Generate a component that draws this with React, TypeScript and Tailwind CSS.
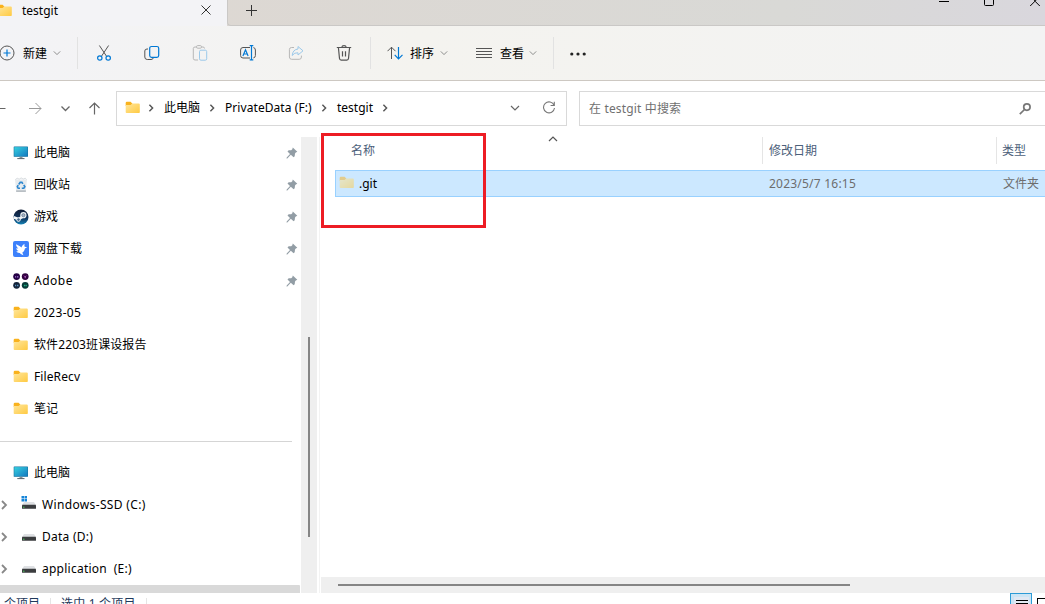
import type { ReactNode } from 'react';

type IconName = 'pc' | 'recycle' | 'steam' | 'bird' | 'adobe' | 'folder' | 'ssd' | 'drive';

interface NavItem {
  name: string;
  icon: IconName;
  pinned?: boolean;
  tracking?: string;
}

const QUICK_ACCESS: NavItem[] = [
  { name: '此电脑', icon: 'pc', pinned: true },
  { name: '回收站', icon: 'recycle', pinned: true },
  { name: '游戏', icon: 'steam', pinned: true },
  { name: '网盘下载', icon: 'bird', pinned: true },
  { name: 'Adobe', icon: 'adobe', pinned: true, tracking: 'tracking-[0.5px]' },
  { name: '2023-05', icon: 'folder', tracking: 'tracking-[0.3px]' },
  { name: '软件2203班课设报告', icon: 'folder', tracking: 'tracking-[0.1px]' },
  { name: 'FileRecv', icon: 'folder', tracking: 'tracking-[0.1px]' },
  { name: '笔记', icon: 'folder' },
];

const DRIVES: NavItem[] = [
  { name: 'Windows-SSD (C:)', icon: 'ssd', tracking: 'tracking-[0.35px]' },
  { name: 'Data (D:)', icon: 'drive', tracking: 'tracking-[0.25px]' },
  { name: 'application  (E:)', icon: 'drive', tracking: 'tracking-[0.25px]' },
];

function Chevron({ dir = 'down', className = '' }: { dir?: 'down' | 'up' | 'right'; className?: string }) {
  const paths = {
    down: 'M1 3 L5 7 L9 3',
    up: 'M1 7 L5 3 L9 7',
    right: 'M3 1 L7 5 L3 9',
  };
  return (
    <svg viewBox="0 0 10 10" fill="none" stroke="currentColor" className={`shrink-0 ${className}`}>
      <path d={paths[dir]} strokeWidth={dir === 'right' ? 1.8 : 1.2} />
    </svg>
  );
}

function Folder({ className = '' }: { className?: string }) {
  return (
    <svg viewBox="0 0 16 16" className={`w-4 h-4 shrink-0 ${className}`}>
      <defs>
        <linearGradient id="folder" x1="0" y1="0" x2="1" y2="1">
          <stop offset="0" stopColor="#ffe69c" />
          <stop offset="1" stopColor="#ffca42" />
        </linearGradient>
      </defs>
      <path d="M.7 3Q.7 1.800 1.800 1.800H5.600L7.200 3.400V6H.7z" fill="#f9b21d" />
      <path d="M.7 5H5.600L7.200 3.400H13.800Q14.800 3.400 14.800 4.400V12.200Q14.800 13 14 13H1.600Q.7 13 .7 12.200z" fill="url(#folder)" />
    </svg>
  );
}

function ItemIcon({ icon }: { icon: IconName }) {
  if (icon === 'folder') return <Folder />;
  return (
    <svg viewBox="0 0 16 16" className="w-4 h-4 shrink-0">
      {icon === 'pc' && (
        <>
          <defs>
            <linearGradient id="screen" x1="0" y1="0" x2="1" y2="1">
              <stop offset="0" stopColor="#36d1e0" />
              <stop offset="1" stopColor="#1479c0" />
            </linearGradient>
          </defs>
          <rect x="0.7" y="1.5" width="14.3" height="10.3" rx="0.6" fill="#17739f" />
          <rect x="1.3" y="2.1" width="13.1" height="9.1" fill="url(#screen)" />
          <path d="M6.5 11.800h3v1.600h-3z" fill="#8b9298" />
          <path d="M4.300 13.100h7.200v1H4.300z" fill="#596168" />
        </>
      )}
      {icon === 'recycle' && (
        <>
          <path d="M2 2.200h12L12.800 14.500H3.200z" fill="#e7ebee" />
          <path d="M2.400 2.500l1.800-1.300 2 .9 2-1.200 2 1.100 2-.8 1.300 1.200" fill="#f5f6f7" stroke="#c5cbd0" strokeWidth="0.6" />
          <path d="M3.100 13.200h9.800l-.1 1.800H3.200z" fill="#b9bfc4" />
          <path d="M5.700 7.500L7.200 5.400h1.700l1 1.500M10.800 7.900l1.100 1.900-1.100 1.500H8.800M7 11.300H5.200L4.300 9.800l.9-1.700" fill="none" stroke="#2d87cf" strokeWidth="1.600" />
        </>
      )}
      {icon === 'steam' && (
        <>
          <defs>
            <linearGradient id="steam" x1="0" y1="0" x2="0" y2="1">
              <stop offset="0" stopColor="#111c35" />
              <stop offset="0.6" stopColor="#103661" />
              <stop offset="1" stopColor="#1585b8" />
            </linearGradient>
          </defs>
          <circle cx="8" cy="8" r="7.5" fill="url(#steam)" />
          <path d="M.6 8.300L5.500 10.300L9.200 7.800" fill="none" stroke="#f2f5f8" strokeWidth="2.600" />
          <circle cx="10.400" cy="6.200" r="3.100" fill="#eef2f6" />
          <circle cx="10.400" cy="6.200" r="1.600" fill="#a9b7c8" stroke="#53677f" strokeWidth="0.600" />
          <circle cx="5.500" cy="10.600" r="1.800" fill="#4b6b8b" stroke="#eef2f6" strokeWidth="1" />
        </>
      )}
      {icon === 'bird' && (
        <>
          <rect width="16" height="16" rx="2" fill="#3d81fb" />
          <path d="M3 3.200C5.200 4 7 5.200 8.400 6.400 9.200 4.400 10 3.600 11.600 2.700 11.200 4 11.500 5 11.700 5.800L14.200 6.300 11.900 7.600C11.500 9.700 10.700 11 9.300 11.500L10.400 14.200C8.800 13.600 7.700 12.800 6.800 11.900 5.200 12 4 11.500 3.200 10.600L5.600 10C4.100 9.300 3.400 8.400 3.200 7.300L5.300 7.500C3.800 6.300 3.100 4.800 3 3.200z" fill="#fff" />
        </>
      )}
      {icon === 'adobe' && (
        <>
          <circle cx="3.600" cy="3.600" r="3.400" fill="#250044" />
          <circle cx="12.200" cy="3.600" r="3.400" fill="#30003f" />
          <circle cx="3.600" cy="12.300" r="3.400" fill="#14253b" />
          <circle cx="12.200" cy="12.300" r="3.400" fill="#063b38" />
          <path d="M2 3.800h1.200M4 3.800h1.400" stroke="#a179d8" strokeWidth="1.300" />
          <path d="M11 2.700l1.200 1.200 1.200-1.200M12.200 3.900v1.300" stroke="#b15fc4" fill="none" />
          <path d="M2 12.500h1.200M4 12.500h1.400" stroke="#5690bd" strokeWidth="1.300" />
          <path d="M10.900 12.500h1M12.500 12.500h1.200" stroke="#24bd8d" strokeWidth="1.300" />
        </>
      )}
      {(icon === 'ssd' || icon === 'drive') && (
        <>
          <path d="M3 6h10l2 3.200H1z" fill="#dfe1e4" />
          <rect x="1" y="8.800" width="14" height="4" rx="0.4" fill="#3b3d3f" />
          <path d="M2 11.200h1.500" stroke="#50dd63" strokeWidth="0.9" />
        </>
      )}
      {icon === 'ssd' && (
        <path d="M.5 0h2.500v2.500H.5zM3.500 0h2.500v2.500H3.500zM.5 3h2.500v2.500H.5zM3.500 3h2.500v2.500H3.500z" fill="#1685d9" />
      )}
    </svg>
  );
}

function Pin() {
  return (
    <svg viewBox="0 0 12 12" className="w-3 h-3 shrink-0" fill="#929da5">
      <path d="M6.800.6L11.300 4.800 9.800 5.600 9 6.600 8.700 9.200 7.600 10.300 4.800 7.700 1.300 11.400.5 11.500.7 10.600 4 6.900 1.500 4.400 2.700 3.200 5.200 3.200 6.300 2.200z" />
    </svg>
  );
}

function TreeRow({ item, nested }: { item: NavItem; nested?: boolean }) {
  return (
    <div className="h-8 flex items-center">
      {nested ? (
        <>
          <Chevron dir="right" className="w-[10px] h-[10px] -ml-px mr-3 text-[#888]" />
          <span className="-mt-0.5"><ItemIcon icon={item.icon} /></span>
        </>
      ) : (
        <span className="ml-[13px]"><ItemIcon icon={item.icon} /></span>
      )}
      <span className={`ml-[5px] flex-1 whitespace-pre ${item.tracking ?? ''}`}>{item.name}</span>
      {item.pinned && <span className="mr-[3px]"><Pin /></span>}
    </div>
  );
}

function ToolIcon({ children, className = '' }: { children: ReactNode; className?: string }) {
  return (
    <svg viewBox="0 0 16 16" fill="none" stroke="#555" className={`w-4 h-4 shrink-0 ${className}`}>
      {children}
    </svg>
  );
}

function Separator({ className = '' }: { className?: string }) {
  return <div className={`w-px h-8 bg-[#e2e2e2] shrink-0 ${className}`} />;
}

function TitleBar() {
  return (
    <div className="h-[26px] flex shrink-0 bg-gradient-to-r from-[#ddd8d3] from-20% via-[#d9d9d6] via-75% to-[#d9d7dd]">
      <div className="w-[227px] flex items-center bg-[#f3f3f6]">
        <Folder className="-ml-[3px] -mt-[5px]" />
        <span className="ml-[9px] -mt-[4px] flex-1">testgit</span>
        <svg viewBox="0 0 10 10" className="w-[10px] h-[10px] -mt-[7px] mr-4" stroke="#333" fill="none">
          <path d="M.5.5l9 9M9.500.5l-9 9" />
        </svg>
      </div>
      <div className="flex-1 flex border-l border-b border-[#cac8c6] rounded-bl-[4px]">
        <svg viewBox="0 0 11 11" className="w-[11px] h-[11px] mt-[5px] ml-[18px]" stroke="#333">
          <path d="M5.500 0v11M0 5.500h11" />
        </svg>
        <div className="flex-1" />
        <svg viewBox="0 0 106 8" className="w-[106px] h-2" fill="none" stroke="#000">
          <path d="M0 1.500h10" />
          <path d="M45.500 0v4.500q0 1 1 1h7q1 0 1-1V0" />
          <path d="M91.200 6l4.800-4.800 4.800 4.800M94.800 0l1.200 1.200 1.200-1.200" />
        </svg>
      </div>
    </div>
  );
}

function Toolbar() {
  return (
    <div className="h-[55px] flex items-center shrink-0 border-b border-[#cdc8c2] bg-gradient-to-r from-[#f3f3f6] via-[#f4f3ef] via-40% to-[#f3f3f3]">
      <ToolIcon className="-ml-px">
        <circle cx="8" cy="8" r="7" />
        <path d="M8 4.500v7M4.500 8h7" stroke="#0078d4" strokeWidth="1.200" />
      </ToolIcon>
      <span className="ml-2 pt-0.5 w-[30px]">新建</span>
      <Chevron className="w-2 h-2 text-[#888]" />
      <Separator className="ml-4" />
      <ToolIcon className="ml-[18px]">
        <path d="M3.400.5l7.300 11M12.600.5L5.300 11.500" />
        <circle cx="3.800" cy="13" r="2.200" stroke="#0078d4" strokeWidth="1.200" />
        <circle cx="12.200" cy="13" r="2.200" stroke="#0078d4" strokeWidth="1.200" />
      </ToolIcon>
      <ToolIcon className="ml-8">
        <path d="M4 4H3Q.8 4 .8 6v6q0 2.500 2.500 2.500H7q2 0 2.200-1.500" />
        <rect x="5.700" y="1.500" width="9" height="10.800" rx="1.800" stroke="#0078d4" strokeWidth="1.200" />
      </ToolIcon>
      <ToolIcon className="ml-8">
        <path d="M6 15H3q-1.700 0-1.700-1.700V3.500Q1.300 2 3 2h1.500M9.500 2H11q1.500 0 1.500 1.500" stroke="#b7b7b7" />
        <rect x="4.500" y=".6" width="5" height="2.600" rx="1.200" stroke="#b7b7b7" />
        <rect x="7.500" y="5.200" width="7.200" height="10" rx="1.400" stroke="#9cc9ea" />
      </ToolIcon>
      <ToolIcon className="ml-8">
        <path d="M10 2.500H3Q.6 2.500.6 5v5.500Q.6 13 3 13h7M13.400 2.600q2 .2 2 2.400v5.500q0 2.200-2 2.400" />
        <path d="M11.500.7v14.100M9.700.6h3.600M9.700 14.900h3.600" stroke="#0078d4" strokeWidth="1.200" />
        <path d="M2.900 11L5.500 4.700 8.100 11M3.800 9h3.400" stroke="#0078d4" strokeWidth="1.200" />
      </ToolIcon>
      <ToolIcon className="ml-8">
        <path d="M6 2.500H3.500Q1.400 2.500 1.400 4.600V12q0 2.300 2.300 2.300h7.500q2.200 0 2.200-2.200v-1.500" stroke="#b7b7b7" />
        <path d="M10 1.500L15 5.800 10 10V7.800Q6.500 7.300 4.200 10.500 4.800 4.500 10 4z" stroke="#9cc9ea" strokeLinejoin="round" />
      </ToolIcon>
      <ToolIcon className="ml-8">
        <path d="M.8 2.500h14.400M5.800 2.300Q6 .7 8 .7t2.200 1.600M2.400 2.500l1.100 11q.2 1.600 1.600 1.600h5.800q1.400 0 1.600-1.600l1.100-11M6.500 6.300v5.200M9.500 6.300v5.200" strokeWidth="1.200" />
      </ToolIcon>
      <Separator className="ml-[18px]" />
      <ToolIcon className="ml-4">
        <path d="M4.500 14V2.200M.5 6.200l4-4 4 4" />
        <path d="M11.500 2v11.800M7.700 9.800l3.800 4 4-4" stroke="#0078d4" strokeWidth="1.200" />
      </ToolIcon>
      <span className="ml-[7px] pt-0.5 w-[30px]">排序</span>
      <Chevron className="w-2 h-2 text-[#888]" />
      <ToolIcon className="ml-7">
        <path d="M0 3.500h16M0 6.500h16M0 9.500h16M0 12.500h16" />
      </ToolIcon>
      <span className="ml-2 pt-0.5 w-[29px]">查看</span>
      <Chevron className="w-2 h-2 text-[#888]" />
      <Separator className="ml-4" />
      <svg viewBox="0 0 16 4" className="w-4 h-1 ml-4 mt-0.5" fill="#222">
        <circle cx="1.800" cy="2" r="1.600" />
        <circle cx="8" cy="2" r="1.600" />
        <circle cx="14.200" cy="2" r="1.600" />
      </svg>
    </div>
  );
}

function AddressRow() {
  return (
    <div className="h-[56px] pt-[10px] flex shrink-0">
      <div className="w-[116px] h-[35px] flex items-center text-[#666]">
        <svg viewBox="0 0 100 14" className="w-[100px] h-[14px]" fill="none" stroke="currentColor">
          <path d="M0 6.500h5.500" />
          <path d="M29 6.500h12M35.500 1L41 6.500l-5.500 5.500" stroke="#999" />
          <path d="M61.500 4.500l4 4 4-4" strokeWidth="1.300" />
          <path d="M94.500 12.500V1M89.500 6l5-5 5 5" strokeWidth="1.200" />
        </svg>
      </div>
      <div className="w-[451px] h-[35px] pb-px border border-[#d9d9d9] flex items-center">
        <Folder className="ml-2" />
        <Chevron dir="right" className="w-2 h-2 ml-[6px] text-[#555]" />
        <span className="ml-[9px] w-[44px]">此电脑</span>
        <Chevron dir="right" className="w-2 h-2 text-[#555]" />
        <span className="ml-[9px] w-[95px] whitespace-nowrap tracking-[0.07px]">PrivateData (F:)</span>
        <Chevron dir="right" className="w-2 h-2 text-[#555]" />
        <span className="ml-[9px] w-[44px]">testgit</span>
        <Chevron dir="right" className="w-2 h-2 text-[#555]" />
        <Chevron className="w-[10px] h-[10px] ml-[121px] text-[#666]" />
        <svg viewBox="0 0 14 14" className="w-[14px] h-[14px] ml-[22px]" fill="none" stroke="#777" strokeWidth="1.100">
          <path d="M12.100 4.200A5.500 5.500 0 1 0 12.500 7M12.300.8v3.700H8.600" />
        </svg>
      </div>
      <div className="flex-1 h-[35px] ml-3 border border-r-0 border-[#d9d9d9] flex items-center text-[#707070]">
        <span className="ml-[9px] flex-1 tracking-[0.15px]">在 testgit 中搜索</span>
        <svg viewBox="0 0 12 12" className="w-3 h-3 mr-[14px]" fill="none" stroke="#777" strokeWidth="1.700">
          <circle cx="7.900" cy="4.100" r="3.200" />
          <path d="M5.500 6.500L.8 11.200" />
        </svg>
      </div>
    </div>
  );
}

function Sidebar() {
  return (
    <div className="w-[301px] shrink-0">
      {QUICK_ACCESS.map((item) => (
        <TreeRow key={item.name} item={item} />
      ))}
      <div className="h-8 flex items-start">
        <div className="w-[292px] h-px mt-4 bg-[#d5d5d5]" />
      </div>
      <TreeRow item={{ name: '此电脑', icon: 'pc' }} />
      {DRIVES.map((item) => (
        <TreeRow key={item.name} item={item} nested />
      ))}
      <div className="w-[300px] h-2 bg-[#d9d9d9] rounded-tr-[1px]" />
    </div>
  );
}

function FileList() {
  return (
    <div className="relative flex-1 min-w-0 ml-px flex flex-col">
      <div className="h-[27px] flex items-center text-[#4c607a]">
        <span className="ml-[30px] w-[411px]">名称</span>
        <div className="w-px h-[27px] bg-[#e5e5e5]" />
        <span className="ml-[6px] w-[227px]">修改日期</span>
        <div className="w-px h-[27px] bg-[#e5e5e5]" />
        <span className="ml-[5px] whitespace-nowrap">类型</span>
      </div>
      <div className="mt-[6px] ml-[14px] h-[27px] flex items-center bg-[#cce8ff] border border-r-0 border-[#99d1ff] text-[#6d6d6d]">
        <Folder className="ml-[3px] -mt-[2px] opacity-50" />
        <span className="ml-1 w-[410px] text-black">.git</span>
        <span className="w-[234px] tracking-[0.22px]">2023/5/7 16:15</span>
        <span className="whitespace-nowrap">文件夹</span>
      </div>
      <div className="flex-1" />
      <div className="h-4 bg-[#efefef] flex items-center">
        <div className="ml-[17px] w-[512px] h-[2px] bg-[#858585]" />
      </div>
      {/* sort direction marker */}
      <Chevron dir="up" className="absolute left-[227px] -top-[3px] w-[10px] h-[10px] text-[#555]" />
      {/* red callout around the .git folder */}
      <div className="absolute left-0 -top-1 w-[165px] h-[95px] border-[3px] border-[#ed1c24]" />
    </div>
  );
}

function StatusBar() {
  return (
    <div className="h-[11px] flex items-start text-[#1e395b] overflow-hidden shrink-0">
      <span className="ml-[4px] mt-[3px] w-[46px] whitespace-nowrap">个项目</span>
      <div className="w-px h-4 mt-[5px] bg-[#e5e5e5]" />
      <span className="ml-[10px] mt-[3px] w-[85px] whitespace-nowrap tracking-[0.2px]">选中 1 个项目</span>
      <div className="w-px h-4 mt-[5px] bg-[#e5e5e5]" />
      <div className="flex-1" />
      <div className="w-[22px] h-[22px] shrink-0 border border-[#2c9bd6] bg-[#cce5f5]">
        <svg viewBox="0 0 20 20" className="w-5 h-5">
          <path d="M3 3h15v15H3z" fill="#e1e8f2" />
          <path d="M5 6.500h12M5 9.500h12" stroke="#000" />
        </svg>
      </div>
      <div className="w-[13px] h-4 shrink-0 pl-[5px] pt-[5px]">
        <div className="w-4 h-4 border border-black" />
      </div>
    </div>
  );
}

export default function App() {
  return (
    <div className="w-[1045px] h-[604px] overflow-hidden flex flex-col bg-white text-black text-[12px] leading-4 font-['Noto_Sans','Noto_Sans_CJK_SC',sans-serif]">
      <TitleBar />
      <Toolbar />
      <AddressRow />
      <div className="h-[456px] flex shrink-0">
        <Sidebar />
        <div className="w-4 shrink-0 bg-[#efefef] pt-[200px] pl-[7px]">
          <div className="w-[2px] h-[200px] bg-[#858585]" />
        </div>
        <div className="w-[3px] shrink-0 border-r border-[#f3f3f3]" />
        <FileList />
      </div>
      <StatusBar />
    </div>
  );
}
